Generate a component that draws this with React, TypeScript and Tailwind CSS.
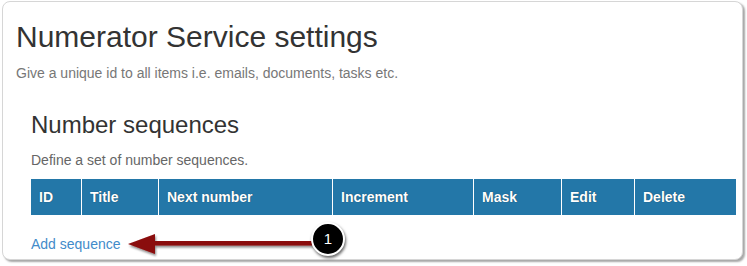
import React from "react";

const cols = [
  { label: "ID", w: "w-[51px]" },
  { label: "Title", w: "w-[77px]" },
  { label: "Next number", w: "w-[174px]" },
  { label: "Increment", w: "w-[141px]" },
  { label: "Mask", w: "w-[88px]" },
  { label: "Edit", w: "w-[73px]" },
  { label: "Delete", w: "flex-1" },
];

export default function App() {
  return (
    <div className="w-[747px] h-[266px] bg-white pt-px pl-[2px]" style={{ fontFamily: '"Liberation Sans", Arial, sans-serif' }}>
      <div className="relative w-[741px] h-[259px] rounded-[8px] border border-[#d6d6d6] bg-white shadow-[2px_2px_2px_rgba(0,0,0,0.35)] pl-[13px] pr-[5px]">
        <h1 className="text-[30px] leading-[34px] text-[#333] mt-[18px]">Numerator Service settings</h1>
        <p className="text-[14px] leading-[16px] text-[#777] mt-[11px]">Give a unique id to all items i.e. emails, documents, tasks etc.</p>
        <div className="pl-[15px]">
          <h3 className="text-[24px] leading-[28px] text-[#333] mt-[30px]">Number sequences</h3>
          <p className="text-[14px] leading-[16px] text-[#666] mt-[13px]">Define a set of number sequences.</p>
          <div className="flex mt-[11px] h-[36px] w-[705px] bg-[#2377a8] text-white text-[14px] font-bold">
            {cols.map((c, i) => (
              <div
                key={c.label}
                className={`${c.w} flex items-center pl-[8px] ${i < cols.length - 1 ? "border-r border-white" : ""} [text-shadow:0_0_1px_rgba(0,0,0,0.5)]`}
              >
                {c.label}
              </div>
            ))}
          </div>
          <a className="block mt-[21px] text-[14px] leading-[16px] text-[#428bca]">Add sequence</a>
        </div>
        <svg className="absolute left-[110px] top-[220px]" width="220" height="40" viewBox="0 0 220 40">
          <defs>
            <filter id="sh" x="-10%" y="-50%" width="130%" height="200%">
              <feDropShadow dx="1" dy="2" stdDeviation="1.2" floodColor="#000" floodOpacity="0.45" />
            </filter>
          </defs>
          <g filter="url(#sh)">
            <rect x="38" y="19" width="170" height="4.5" fill="#8a0b0b" />
            <polygon points="15,22 42,12 42,32" fill="#8a0b0b" />
          </g>
        </svg>
        <div className="absolute left-[308px] top-[220px] w-[34px] h-[34px] rounded-full bg-black border-2 border-white shadow-[1px_2px_3px_rgba(0,0,0,0.6)] flex items-center justify-center text-white text-[15px]">
          1
        </div>
      </div>
    </div>
  );
}
